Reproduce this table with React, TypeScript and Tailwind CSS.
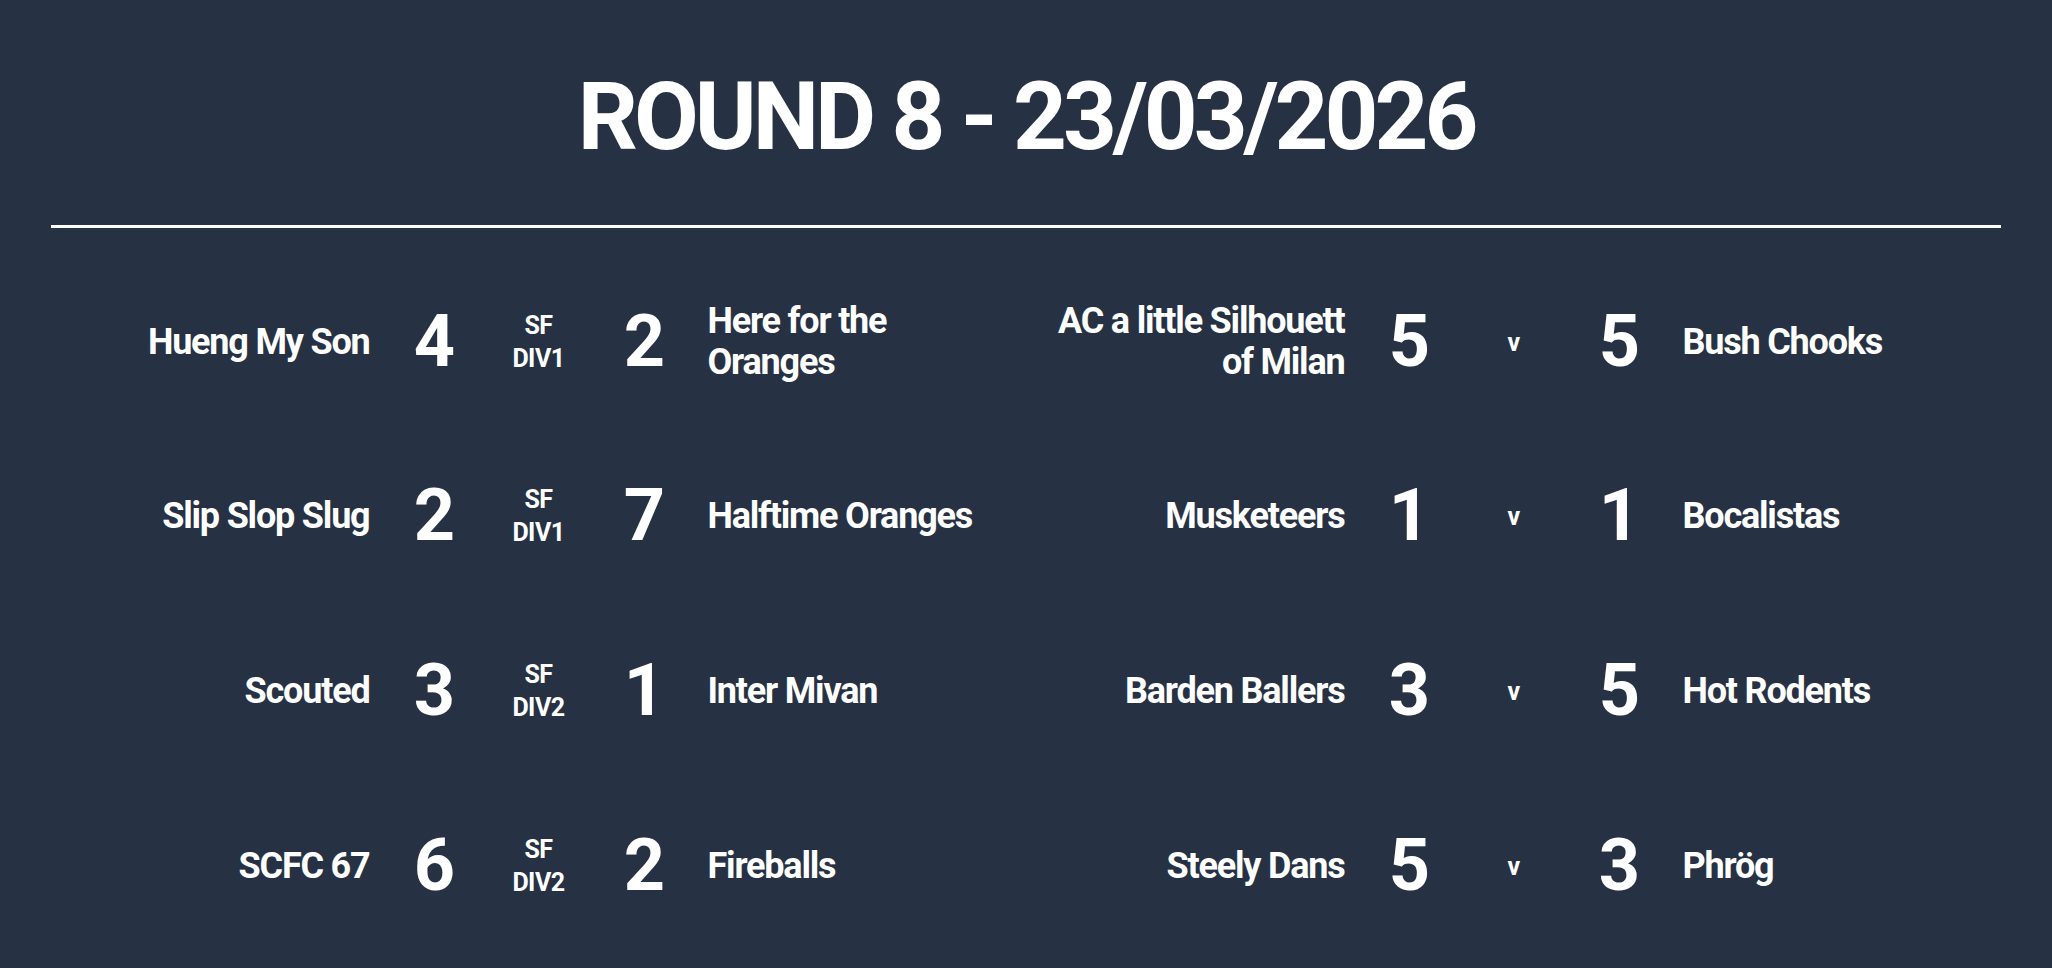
type Match = {
  home: string;
  homeScore: number;
  awayScore: number;
  away: string;
  label?: string[];
};

// names keep the line breaks the board uses
const left: Match[] = [
  { home: "Hueng My Son", homeScore: 4, awayScore: 2, away: "Here for the\nOranges", label: ["SF", "DIV1"] },
  { home: "Slip Slop Slug", homeScore: 2, awayScore: 7, away: "Halftime Oranges", label: ["SF", "DIV1"] },
  { home: "Scouted", homeScore: 3, awayScore: 1, away: "Inter Mivan", label: ["SF", "DIV2"] },
  { home: "SCFC 67", homeScore: 6, awayScore: 2, away: "Fireballs", label: ["SF", "DIV2"] },
];

const right: Match[] = [
  { home: "AC a little Silhouett\nof Milan", homeScore: 5, awayScore: 5, away: "Bush Chooks" },
  { home: "Musketeers", homeScore: 1, awayScore: 1, away: "Bocalistas" },
  { home: "Barden Ballers", homeScore: 3, awayScore: 5, away: "Hot Rodents" },
  { home: "Steely Dans", homeScore: 5, awayScore: 3, away: "Phrög" },
];

function MatchRow({ match }: { match: Match }) {
  return (
    <div className="grid h-20 grid-cols-[1fr_64px_82px_64px_1fr] items-center gap-8">
      {/* home team */}
      <div className="whitespace-pre text-right text-[36px] leading-[41px] font-bold tracking-[-1.2px]">
        {match.home}
      </div>
      <div className="text-center text-[72px] leading-none font-bold tracking-[-2px]">{match.homeScore}</div>
      {/* division or v */}
      <div className="text-center text-[25px] font-bold leading-[33px] tracking-[-0.5px]">
        {match.label ? (
          match.label.map((l) => <div key={l}>{l}</div>)
        ) : (
          <div>v</div>
        )}
      </div>
      <div className="text-center text-[72px] leading-none font-bold tracking-[-2px]">{match.awayScore}</div>
      {/* away team */}
      <div className="whitespace-pre text-left text-[36px] leading-[41px] font-bold tracking-[-1.2px]">
        {match.away}
      </div>
    </div>
  );
}

export default function App() {
  return (
    <div className="min-h-screen bg-[#263244] pt-[70px] text-white font-['Roboto','Liberation_Sans',Arial,sans-serif]">
      <h1 className="text-center text-[94px] leading-none font-bold tracking-[-4px]">ROUND 8 - 23/03/2026</h1>
      <div className="mx-[51px] mt-[61px] h-[3px] bg-white" />
      <div className="mx-[51px] mt-[73px] grid grid-cols-2">
        <div className="flex flex-col gap-[95px]">
          {left.map((m) => (
            <MatchRow key={m.home} match={m} />
          ))}
        </div>
        <div className="flex flex-col gap-[95px]">
          {right.map((m) => (
            <MatchRow key={m.home} match={m} />
          ))}
        </div>
      </div>
    </div>
  );
}
